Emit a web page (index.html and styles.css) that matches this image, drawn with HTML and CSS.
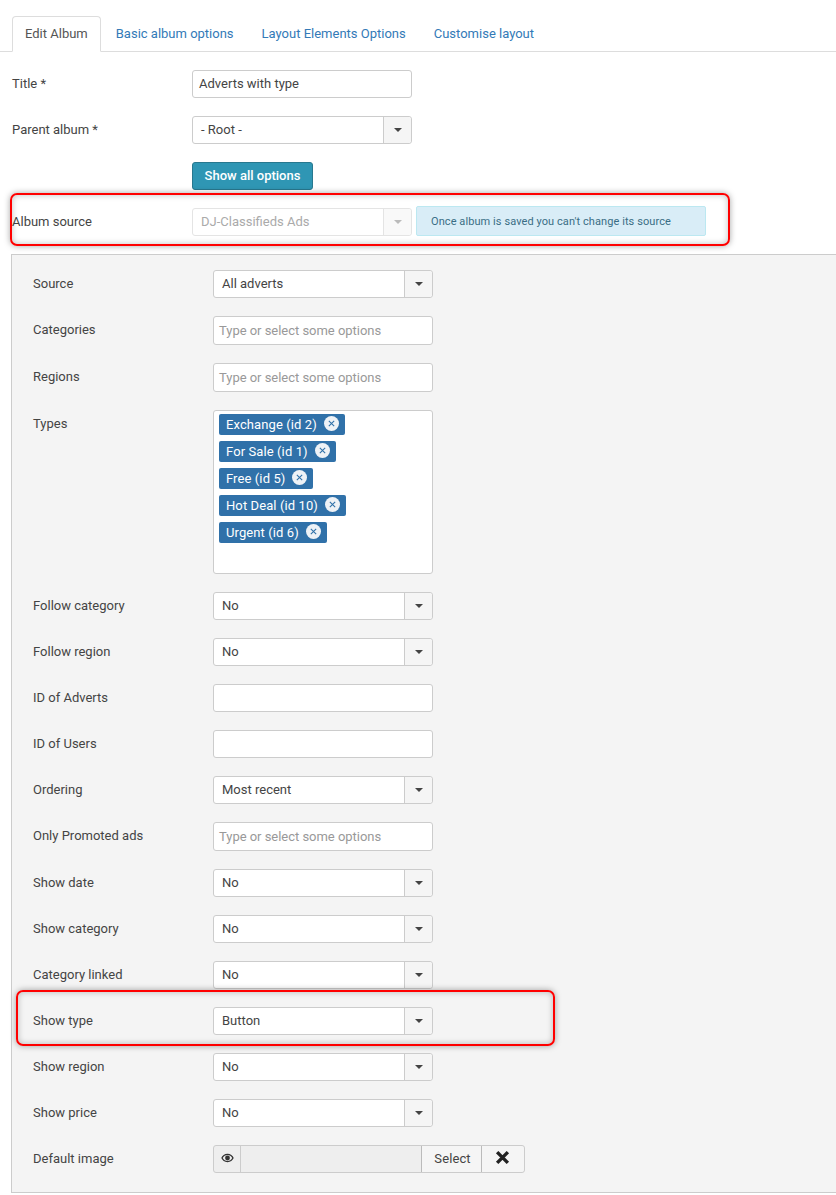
FILE: index.html
```html
<!DOCTYPE html>
<html lang="en">
<head>
<meta charset="utf-8">
<title>Edit Album</title>
<link rel="stylesheet" href="styles.css">
</head>
<body>
<svg class="defs" width="0" height="0" aria-hidden="true">
  <symbol id="caret" viewBox="0 0 8 4"><path d="M0 0h8L4 4z"/></symbol>
</svg>
<nav class="tabs">
  <a class="tab active">Edit Album</a>
  <a class="tab">Basic album options</a>
  <a class="tab">Layout Elements Options</a>
  <a class="tab">Customise layout</a>
</nav>
<main class="form">
  <div class="row"><label>Title *</label><div class="field wide">Adverts with type</div></div>
  <div class="row"><label>Parent album *</label><div class="select wide"><span>- Root -</span><i><svg><use href="#caret"/></svg></i></div></div>
  <div class="row"><span></span><button class="btn-info">Show all options</button></div>
  <div class="row source"><label>Album source</label>
    <div class="select wide disabled"><span>DJ-Classifieds Ads</span><i><svg><use href="#caret"/></svg></i></div>
    <div class="alert">Once album is saved you can't change its source</div>
  </div>
</main>
<section class="panel">
  <div class="row"><label>Source</label><div class="select"><span>All adverts</span><i><svg><use href="#caret"/></svg></i></div></div>
  <div class="row"><label>Categories</label><div class="field multi">Type or select some options</div></div>
  <div class="row"><label>Regions</label><div class="field multi">Type or select some options</div></div>
  <div class="row"><label>Types</label>
    <div class="chips">
      <span class="chip">Exchange (id 2)<svg viewBox="0 0 14 14"><circle cx="7" cy="7" r="7"/><path d="M4.500 4.500l5 5m0-5l-5 5"/></svg></span>
      <span class="chip">For Sale (id 1)<svg viewBox="0 0 14 14"><circle cx="7" cy="7" r="7"/><path d="M4.500 4.500l5 5m0-5l-5 5"/></svg></span>
      <span class="chip">Free (id 5)<svg viewBox="0 0 14 14"><circle cx="7" cy="7" r="7"/><path d="M4.500 4.500l5 5m0-5l-5 5"/></svg></span>
      <span class="chip">Hot Deal (id 10)<svg viewBox="0 0 14 14"><circle cx="7" cy="7" r="7"/><path d="M4.500 4.500l5 5m0-5l-5 5"/></svg></span>
      <span class="chip">Urgent (id 6)<svg viewBox="0 0 14 14"><circle cx="7" cy="7" r="7"/><path d="M4.500 4.500l5 5m0-5l-5 5"/></svg></span>
    </div>
  </div>
  <div class="row"><label>Follow category</label><div class="select"><span>No</span><i><svg><use href="#caret"/></svg></i></div></div>
  <div class="row"><label>Follow region</label><div class="select"><span>No</span><i><svg><use href="#caret"/></svg></i></div></div>
  <div class="row"><label>ID of Adverts</label><div class="field"></div></div>
  <div class="row"><label>ID of Users</label><div class="field"></div></div>
  <div class="row"><label>Ordering</label><div class="select"><span>Most recent</span><i><svg><use href="#caret"/></svg></i></div></div>
  <div class="row"><label>Only Promoted ads</label><div class="field multi">Type or select some options</div></div>
  <div class="row"><label>Show date</label><div class="select"><span>No</span><i><svg><use href="#caret"/></svg></i></div></div>
  <div class="row"><label>Show category</label><div class="select"><span>No</span><i><svg><use href="#caret"/></svg></i></div></div>
  <div class="row"><label>Category linked</label><div class="select"><span>No</span><i><svg><use href="#caret"/></svg></i></div></div>
  <div class="row"><label>Show type</label><div class="select"><span>Button</span><i><svg><use href="#caret"/></svg></i></div></div>
  <div class="row"><label>Show region</label><div class="select"><span>No</span><i><svg><use href="#caret"/></svg></i></div></div>
  <div class="row"><label>Show price</label><div class="select"><span>No</span><i><svg><use href="#caret"/></svg></i></div></div>
  <div class="row"><label>Default image</label>
    <div class="media">
      <span class="eye"><svg viewBox="0 0 14 10"><path d="M7 .5C3.800.5 1.400 2.600.3 5c1.100 2.400 3.500 4.500 6.700 4.500s5.600-2.100 6.700-4.500C12.600 2.600 10.200.5 7 .5zm0 1.300c2.200 0 4.100 1.300 5.100 3.200-1 1.900-2.900 3.200-5.100 3.200S2.900 6.900 1.900 5C2.900 3.100 4.800 1.800 7 1.800z"/><circle cx="7" cy="5" r="2.600"/></svg></span>
      <span class="path"></span>
      <span class="pick">Select</span>
      <span class="clear"><svg viewBox="0 0 14 14"><path d="M2 2l10 10m0-10L2 12"/></svg></span>
    </div>
  </div>
</section>
<div class="mark mark-source"></div>
<div class="mark mark-type"></div>
</body>
</html>
```

FILE: styles.css
```css
* { box-sizing: border-box; }
html, body { margin: 0; }
body {
  position: relative;
  height: 1195px;
  overflow: hidden;
  padding-top: 16px;
  background: #fff;
  color: #444;
  font: 13px/20px Roboto, "Liberation Sans", sans-serif;
}
.defs { position: absolute; }
.tabs {
  display: flex;
  height: 36px;
  padding-left: 12px;
  border-bottom: 1px solid #ddd;
}
.tab {
  height: 36px;
  padding: 7px 12px 0;
  margin-right: 2px;
  border: 1px solid transparent;
  border-radius: 4px 4px 0 0;
  color: #337ab7;
}
.tab.active {
  color: #555;
  background: #fff;
  border-color: #ddd #ddd #fff;
}
.form {
  display: grid;
  row-gap: 18px;
  padding: 18px 0 0 12px;
}
.row {
  display: flex;
  align-items: flex-start;
}
.row > label, .row > span:first-child {
  flex: 0 0 180px;
  padding-top: 4px;
}
.field, .select, .chips, .media {
  width: 220px;
  border: 1px solid #ccc;
  border-radius: 3px;
  background: #fff;
}
.field {
  height: 28px;
  padding: 3px 6px;
}
.field.multi {
  height: 29px;
  padding: 4px 5px 0;
  color: #999;
  letter-spacing: -.03px;
}
.select {
  display: flex;
  height: 28px;
}
.select span {
  flex: 1;
  padding: 3px 8px;
}
.select i {
  display: flex;
  flex: 0 0 28px;
  align-items: center;
  justify-content: center;
  border-left: 1px solid #ccc;
  border-radius: 0 3px 3px 0;
  background: #f5f5f5;
}
.select svg {
  width: 8px;
  height: 4px;
  fill: #444;
}
.btn-info {
  height: 28px;
  width: 121px;
  padding: 0;
  border: 1px solid #28788f;
  border-radius: 3px;
  background: #2f96b4;
  color: #fff;
  font: 500 13px/20px Roboto, "Liberation Sans", sans-serif;
}
.source { align-items: center; }
.source > label { padding-top: 0; }
.select.disabled {
  border-color: #e4e4e4;
  color: #aaa;
}
.select.disabled i {
  border-left-color: #e4e4e4;
  background: #f9f9f9;
}
.select.disabled svg { fill: #bbb; }
.alert {
  width: 290px;
  height: 30px;
  margin: -2px 0 0 4px;
  padding: 5px 14px;
  border: 1px solid #bce8f1;
  border-radius: 2px;
  background: #d9edf7;
  color: #3a6d85;
  font-size: 11px;
  letter-spacing: .08px;
}
.panel {
  display: grid;
  align-content: start;
  row-gap: 18px;
  margin: 18px 0 0 11px;
  height: 939px;
  padding: 15px 0 0 21px;
  border: 1px solid #ccc;
  border-right: 0;
  background: #f4f4f4;
}
.chips {
  display: flex;
  flex-direction: column;
  align-items: flex-start;
  gap: 6px;
  height: 164px;
  padding: 3px 5px;
}
.chip {
  display: flex;
  align-items: center;
  height: 21px;
  padding: 0 6px 0 7px;
  border-radius: 2px;
  background: #3071a9;
  color: #fff;
  letter-spacing: .1px;
}
.chip svg {
  width: 15px;
  height: 15px;
  margin: -2px 0 0 7px;
}
.chip circle { fill: #eef2f6; }
.chip path {
  fill: none;
  stroke: #3071a9;
  stroke-width: 1;
}
.media {
  display: flex;
  width: 312px;
  height: 28px;
  background: #eee;
}
.media > span { display: flex; align-items: center; justify-content: center; }
.eye { flex: 0 0 27px; border-right: 1px solid #ccc; }
.eye svg { width: 13px; height: 10px; fill: #333; margin-top: -3px; }
.path { flex: 1; }
.pick, .clear {
  background: #f5f5f5;
  border-left: 1px solid #bbb;
}
.pick { flex: 0 0 60px; letter-spacing: .1px; padding-left: 2px; }
.clear { flex: 0 0 43px; border-radius: 0 3px 3px 0; }
.clear svg { width: 15px; height: 15px; margin: -3px 1px 0 0; fill: none; stroke: #222; stroke-width: 3.200; }
.mark {
  position: absolute;
  border: 2px solid #f00;
  border-radius: 7px;
  box-shadow: 0 0 6px rgba(0,0,0,.35), inset 0 0 6px rgba(0,0,0,.25);
  pointer-events: none;
}
.mark-source { left: 10px; top: 193px; width: 720px; height: 53px; }
.mark-type { left: 16px; top: 990px; width: 539px; height: 56px; }
```
